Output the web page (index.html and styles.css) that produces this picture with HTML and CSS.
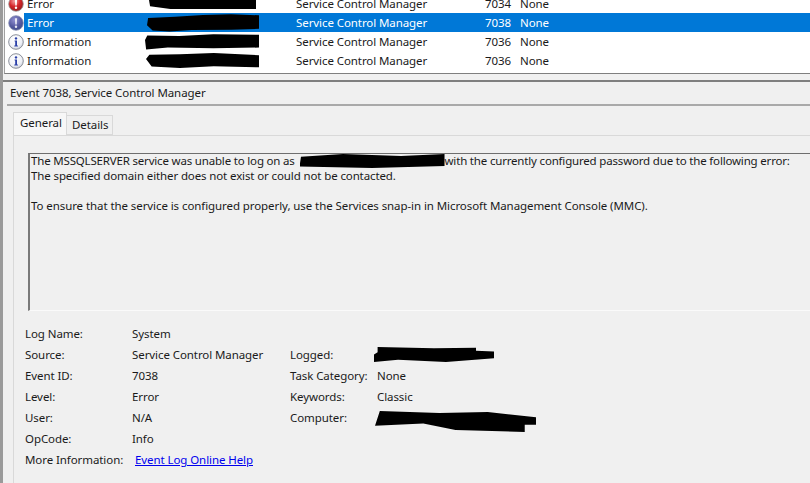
FILE: index.html
```html
<!DOCTYPE html>
<html lang="en">
<head>
<meta charset="utf-8">
<title>Event 7038, Service Control Manager</title>
<link rel="stylesheet" href="styles.css">
</head>
<body>
<svg class="defs" width="0" height="0" aria-hidden="true">
  <defs>
    <radialGradient id="gr" cx="40%" cy="30%" r="75%"><stop offset="0" stop-color="#f4a0a0"/><stop offset=".5" stop-color="#d5252a"/><stop offset="1" stop-color="#8f1a1a"/></radialGradient>
    <radialGradient id="gb" cx="40%" cy="30%" r="75%"><stop offset="0" stop-color="#8f8fd0"/><stop offset=".6" stop-color="#54589f"/><stop offset="1" stop-color="#3c4a86"/></radialGradient>
    <radialGradient id="gw" cx="40%" cy="30%" r="75%"><stop offset="0" stop-color="#ffffff"/><stop offset=".7" stop-color="#eef0f6"/><stop offset="1" stop-color="#c4c9d6"/></radialGradient>
    <symbol id="ic-error" viewBox="0 0 16 16"><circle cx="8" cy="8" r="7.3" fill="url(#gr)" stroke="#9a9a9a" stroke-width=".8"/><path d="M6.9 3.2h2.2L8.7 9.6H7.3z" fill="#fff"/><circle cx="8" cy="11.8" r="1.2" fill="#fff"/></symbol>
    <symbol id="ic-sel" viewBox="0 0 16 16"><circle cx="8" cy="8" r="7.3" fill="url(#gb)" stroke="#8a93b4" stroke-width=".8"/><path d="M6.9 3.2h2.2L8.7 9.6H7.3z" fill="#e8e8f4"/><circle cx="8" cy="11.8" r="1.2" fill="#e8e8f4"/></symbol>
    <symbol id="ic-info" viewBox="0 0 16 16"><circle cx="8" cy="8" r="7.3" fill="url(#gw)" stroke="#8b8f99" stroke-width="1"/><circle cx="8" cy="4.4" r="1.2" fill="#2a3fa8"/><path d="M6.6 6.6H9v5h.9v1H6.3v-1h.9v-4h-.6z" fill="#2a3fa8"/></symbol>
  </defs>
</svg>

<section class="list">
  <div class="row row-first">
    <svg class="icon"><use href="#ic-error"/></svg>
    <span class="c-level">Error</span>
    <span class="c-date"><i class="ink ink-a"></i></span>
    <span class="c-src">Service Control Manager</span>
    <span class="c-id">7034</span>
    <span class="c-task">None</span>
  </div>
  <div class="row row-sel">
    <svg class="icon"><use href="#ic-sel"/></svg>
    <span class="c-level c-sel">Error</span>
    <span class="c-date c-sel"><i class="ink ink-b"></i></span>
    <span class="c-src c-sel">Service Control Manager</span>
    <span class="c-id c-sel">7038</span>
    <span class="c-task c-sel c-fill">None</span>
  </div>
  <div class="row">
    <svg class="icon"><use href="#ic-info"/></svg>
    <span class="c-level">Information</span>
    <span class="c-date"><i class="ink ink-c"></i></span>
    <span class="c-src">Service Control Manager</span>
    <span class="c-id">7036</span>
    <span class="c-task">None</span>
  </div>
  <div class="row">
    <svg class="icon"><use href="#ic-info"/></svg>
    <span class="c-level">Information</span>
    <span class="c-date"><i class="ink ink-d"></i></span>
    <span class="c-src">Service Control Manager</span>
    <span class="c-id">7036</span>
    <span class="c-task">None</span>
  </div>
</section>

<main class="detail">
  <h1 class="title">Event 7038, Service Control Manager</h1>
  <nav class="tabs">
    <span class="tab tab-on">General</span>
    <span class="tab">Details</span>
  </nav>
  <div class="panel">
    <div class="message">
      <p class="lead">The MSSQLSERVER service was unable to log on as <i class="ink ink-msg"></i>with the currently configured password due to the following error:</p>
      <p class="second">The specified domain either does not exist or could not be contacted.</p>
      <p class="gap">To ensure that the service is configured properly, use the Services snap-in in Microsoft Management Console (MMC).</p>
    </div>
    <div class="props">
      <span class="k">Log Name:</span><span class="v">System</span><span></span><span></span>
      <span class="k">Source:</span><span class="v">Service Control Manager</span><span class="k">Logged:</span><span class="v"><i class="ink ink-log"></i></span>
      <span class="k">Event ID:</span><span class="v">7038</span><span class="k">Task Category:</span><span class="v">None</span>
      <span class="k">Level:</span><span class="v">Error</span><span class="k">Keywords:</span><span class="v">Classic</span>
      <span class="k">User:</span><span class="v">N/A</span><span class="k">Computer:</span><span class="v"><i class="ink ink-comp"></i></span>
      <span class="k">OpCode:</span><span class="v">Info</span><span></span><span></span>
      <span class="k">More Information:</span><a class="link" href="#">Event Log Online Help</a>
    </div>
  </div>
</main>
</body>
</html>
```

FILE: styles.css
```css
* { box-sizing: border-box; }
html, body { margin: 0; padding: 0; }
body {
  width: 810px;
  height: 483px;
  overflow: hidden;
  background: #f0f0f0;
  font-family: "Noto Sans", "Open Sans", sans-serif;
  font-size: 11.5px;
  letter-spacing: -0.08px;
  color: #1a1a1a;
  border-left: 3px solid #9a9a9a;
}
.defs { position: absolute; }
.list {
  height: 74px;
  margin-left: 1px;
  background: #fff;
  border-left: 1px solid #a0a0a0;
  border-bottom: 1px solid #7f7f7f;
  overflow: hidden;
}
.row { display: flex; height: 19px; align-items: center; line-height: 18px; }
.row-first { height: 13px; align-items: flex-end; }
.icon { width: 16px; height: 16px; margin-left: 3px; flex: none; }
.row-first .icon { margin-bottom: 1px; }
.c-level { width: 122px; padding-left: 3px; flex: none; }
.c-date { width: 150px; flex: none; height: 100%; display: flex; align-items: center; }
.c-src { width: 189px; flex: none; }
.c-id { width: 35px; flex: none; }
.c-task { width: 60px; flex: none; }
.c-sel { background: #0078d7; color: #fff; height: 100%; line-height: 19px; }
.c-fill { flex: 1; }
.row-first .c-date { align-items: flex-start; }
.ink { display: inline-block; background: #000; }
.ink-a { width: 107px; height: 9px; margin-left: 3px; clip-path: polygon(0 0, 100% 0, 100% 100%, 20% 100%, 1% 70%); }
.ink-b { width: 112px; height: 18px; margin-left: 1px; clip-path: polygon(1% 25%, 25% 18%, 50% 8%, 75% 4%, 100% 10%, 100% 85%, 75% 90%, 40% 92%, 20% 100%, 5% 95%, 0 65%); }
.ink-c { width: 114px; height: 16px; margin-left: -1px; clip-path: polygon(2% 12%, 30% 15%, 60% 5%, 100% 8%, 100% 88%, 60% 92%, 20% 88%, 1% 100%, 0 40%); }
.ink-d { width: 113px; height: 15px; clip-path: polygon(3% 12%, 30% 8%, 60% 0, 100% 15%, 100% 95%, 60% 88%, 30% 100%, 5% 90%, 0 40%); }
.detail { border-top: 2px solid #7f7f7f; margin-top: 6px; }
.title {
  margin: 0 0 0 4px;
  height: 24px;
  border-bottom: 2px solid #a9a9a9;
  padding-left: 3px;
  font-size: 11.5px;
  font-weight: 400;
  line-height: 21px;
}
.tabs { display: flex; margin: 6px 0 0 10px; height: 23px; align-items: flex-end; }
.tab {
  height: 20px;
  padding: 0 4px 0 5px;
  line-height: 18px;
  background: #f0f0f0;
  border: 1px solid #d9d9d9;
  border-left: 0;
}
.tab-on {
  height: 23px;
  padding: 0 6px;
  line-height: 19px;
  width: 54px;
  background: #f7f7f7;
  border: 1px solid #d9d9d9;
  border-bottom: 0;
}
.panel {
  margin: 0 0 0 10px;
  border-top: 1px solid #d9d9d9;
  border-left: 1px solid #d9d9d9;
  padding: 17px 0 0 14px;
  height: 349px;
  background: #f0f0f0;
}
.message {
  height: 158px;
  border-top: 1px solid #6e6e6e;
  border-left: 2px solid #7a7a7a;
  border-bottom: 1px solid #fafafa;
  padding-left: 1px;
  line-height: 15px;
}
.message p { margin: 0; white-space: nowrap; }
.message .lead { margin-top: -1px; letter-spacing: -0.18px; }
.message .second { letter-spacing: -0.12px; }
.message .gap { margin-top: 15px; }
.ink-msg { width: 145px; height: 14px; vertical-align: -3px; margin-left: 2px; clip-path: polygon(1% 20%, 30% 0, 70% 15%, 100% 0, 100% 85%, 50% 100%, 0 90%); }
.props {
  display: grid;
  grid-template-columns: 107px 158px 87px 1fr;
  grid-auto-rows: 21px;
  line-height: 19px;
  margin: 13px 0 0 -3px;
  white-space: nowrap;
}
.ink-log { width: 120px; height: 15px; margin-left: -3px; vertical-align: -3px; clip-path: polygon(3% 0, 50% 8%, 85% 5%, 85% 25%, 100% 30%, 100% 75%, 60% 100%, 20% 85%, 0 100%, 0 50%, 3% 35%); }
.ink-comp { width: 161px; height: 21px; margin-left: -2px; vertical-align: -10px; clip-path: polygon(3% 0, 40% 10%, 70% 5%, 100% 30%, 100% 65%, 93% 65%, 93% 100%, 50% 90%, 30% 60%, 0 70%); }
.link { color: #0000ee; text-decoration: underline; margin-left: 3px; grid-column: 2 / 5; }
```
